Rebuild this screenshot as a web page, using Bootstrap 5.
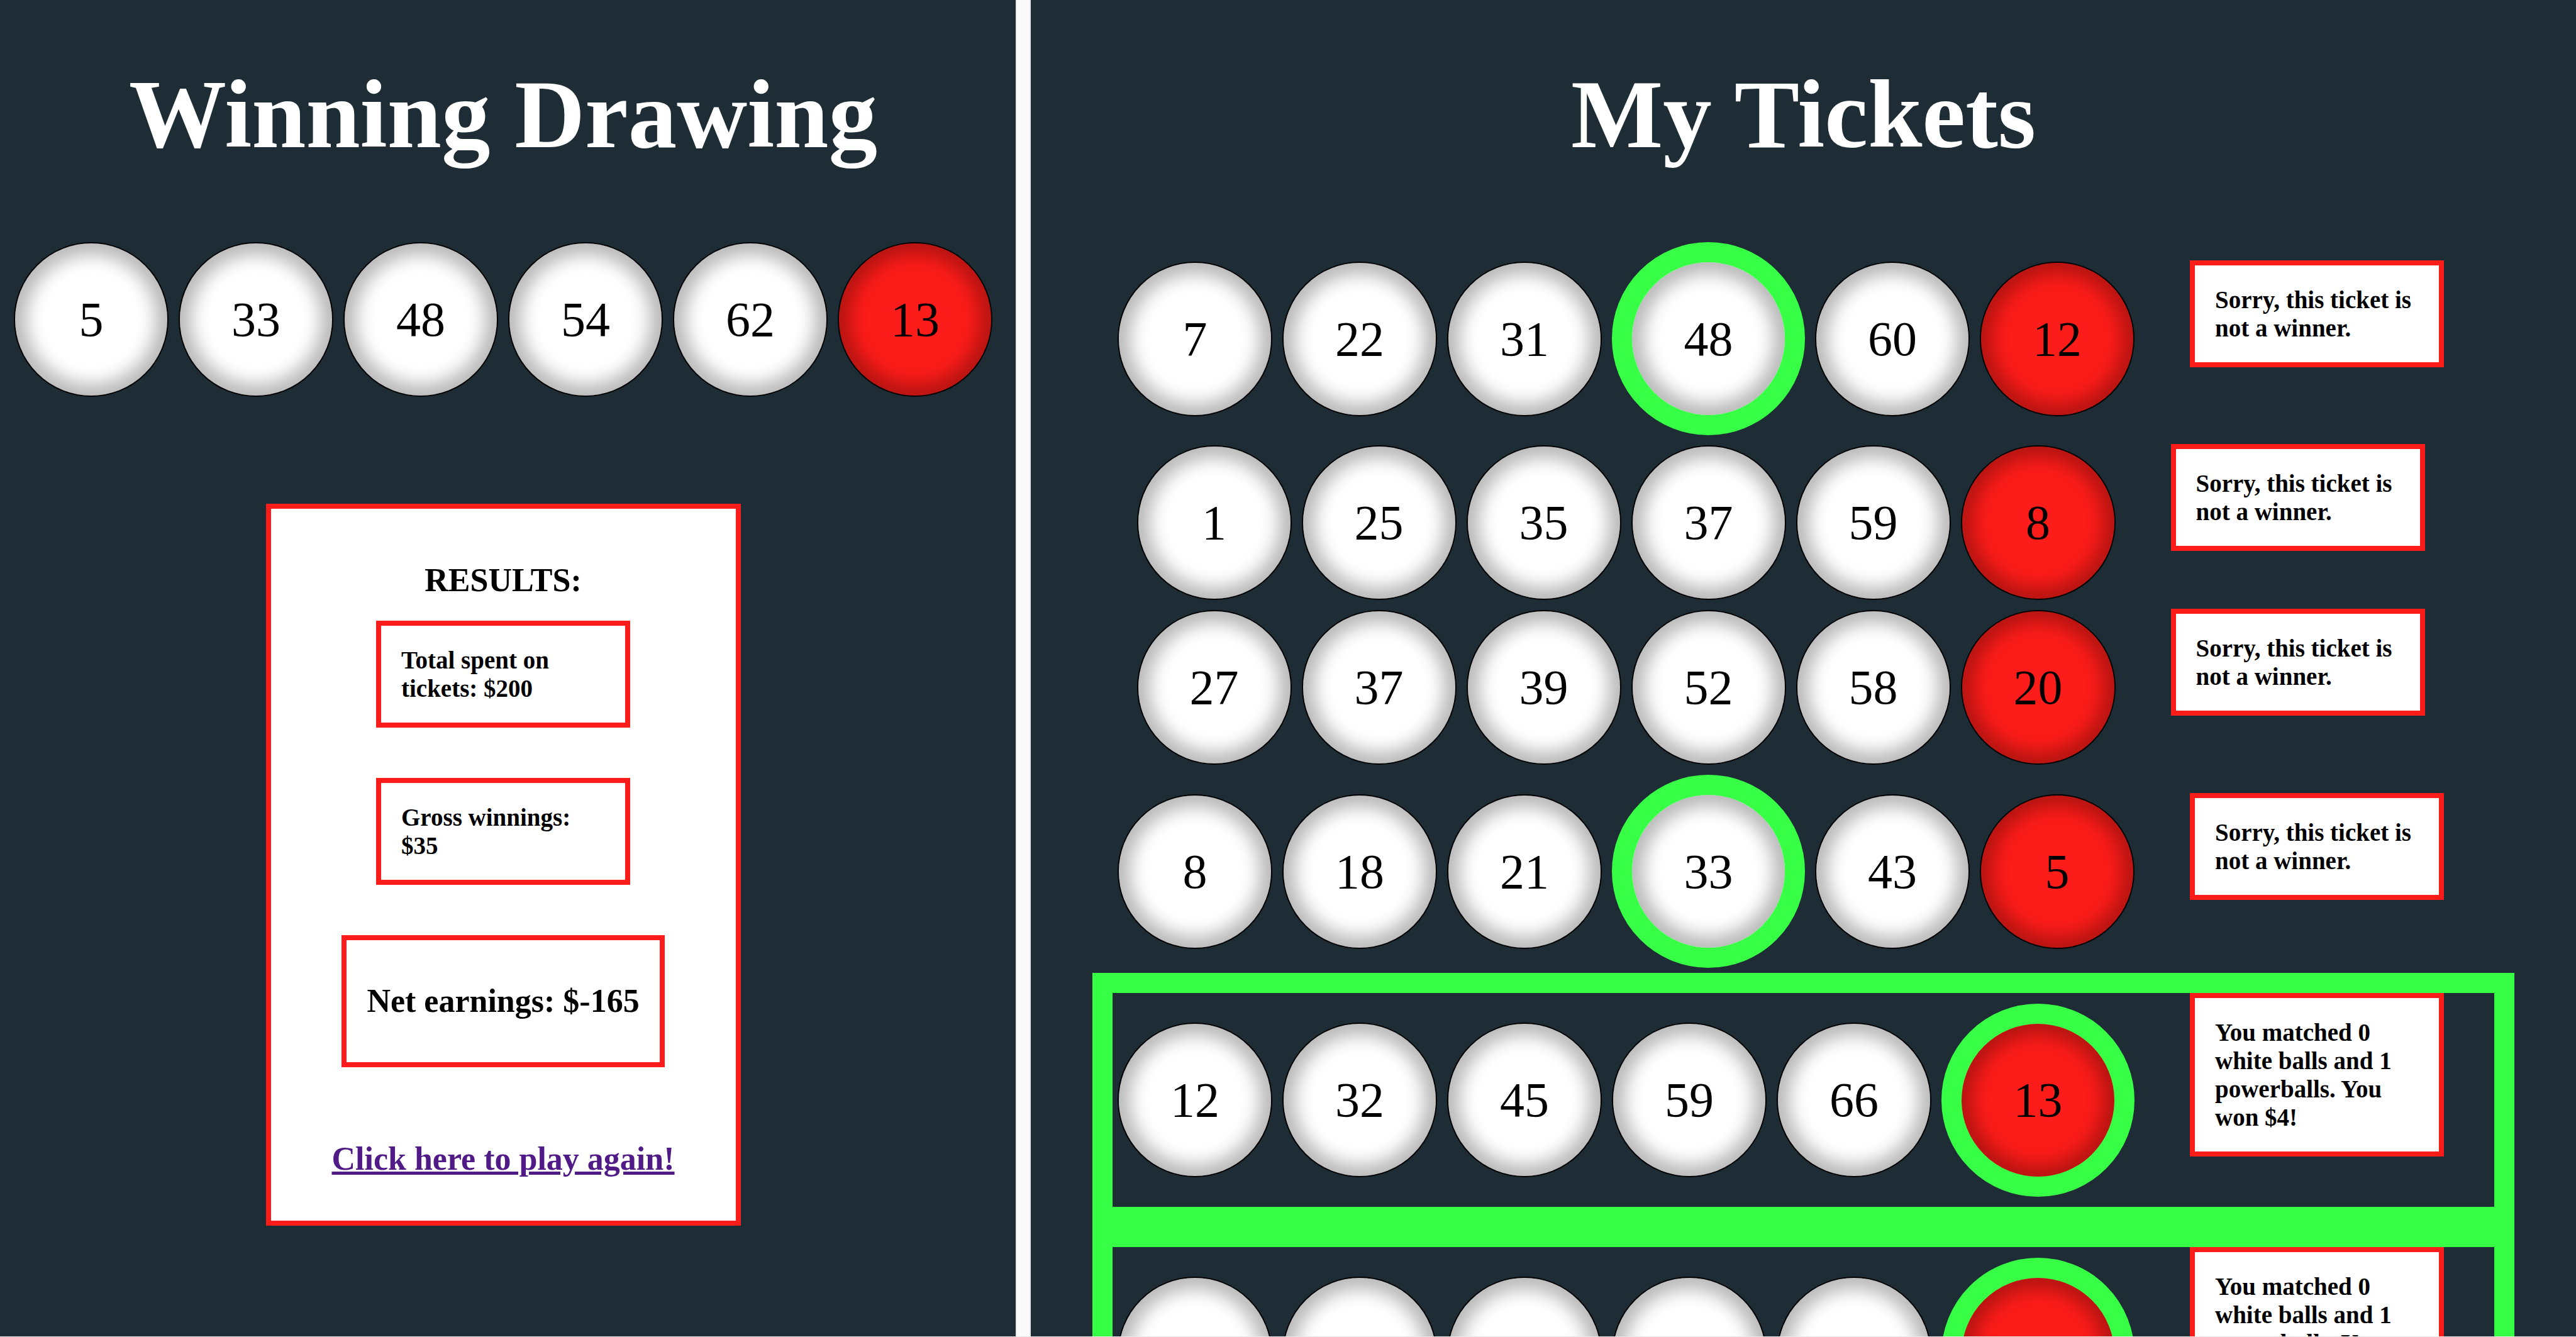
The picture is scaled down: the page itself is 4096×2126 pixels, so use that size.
<!DOCTYPE html>
<html lang="en">
<head>
<meta charset="utf-8">
<meta name="viewport" content="width=device-width, initial-scale=1">
<title>Powerball results</title>
<link rel="stylesheet" href="https://cdn.jsdelivr.net/npm/bootstrap@5.3.0/dist/css/bootstrap.min.css">
<style>
  :root { --night: #1e2d35; --win: #37ff46; --power: #fc1c19; --rail: #e8e8e8; }
  body { background: var(--rail); color: #000; font-family: "Liberation Serif", "Times New Roman", serif; }
  .frames { height: calc(100vh - 1px); }
  .pane { background: var(--night); }
  .pane-drawing { flex: 0 0 39.43%; padding-right: 15px; }
  .pane-divider { flex: 0 0 24px; background: #fafafa; border: solid var(--rail); border-width: 0 2px; }
  .pane-title { font-size: 155px; font-weight: 700; line-height: 178px; padding: 93px 0 106px; margin: 0; color: #fff; }
  .ball { flex: none; width: 246px; height: 246px; margin: 8px; border: 2px solid #000; border-radius: 50%;
    background: #fff; font-size: 78px; line-height: 90px; box-shadow: inset 0 0 28px 18px rgba(0, 0, 0, .28); }
  .ball-power { background: var(--power); }
  .ball-hit { width: 307px; height: 307px; border: 32px solid var(--win); }
  .note { width: 404px; border: 8px solid var(--power); background: #fff; padding: 32px; margin-bottom: 80px;
    font-size: 39px; font-weight: 700; line-height: 45px; }
  .ticket .note { margin-left: 80px; margin-right: 80px; }
  .ticket-win { border: 32px solid var(--win); }
  .results { width: 755px; margin-top: 162px; border: 8px solid var(--power); background: #fff; padding: 84px 0 68px;
    font-size: 52px; font-weight: 700; line-height: 60px; }
  .results h2 { font: inherit; margin: 0 0 34px; }
  .note.note-net { width: auto; font-size: 52px; line-height: 60px; padding: 67px 32px; }
  .again { color: #511b87; margin-top: 36px; }
  .again:hover { color: #511b87; }
</style>
</head>
<body>
<div class="frames d-flex overflow-hidden">
  <section class="pane pane-drawing d-flex flex-column align-items-center overflow-hidden">
    <h1 class="pane-title">Winning Drawing</h1>
    <div class="d-flex p-0" id="drawing"></div>
    <div class="results d-flex flex-column align-items-center">
      <h2>RESULTS:</h2>
      <div class="note">Total spent on tickets: $200</div>
      <div class="note">Gross winnings: $35</div>
      <div class="note note-net">Net earnings: $-165</div>
      <a class="again" href="#">Click here to play again!</a>
    </div>
  </section>
  <div class="pane-divider"></div>
  <main class="pane flex-fill d-flex flex-column align-items-center overflow-hidden">
    <h1 class="pane-title">My Tickets</h1>
    <div class="d-flex flex-column align-items-center" id="tickets"></div>
  </main>
</div>
<script src="https://cdn.jsdelivr.net/npm/bootstrap@5.3.0/dist/js/bootstrap.bundle.min.js"></script>
<script>
  const drawing = [5, 33, 48, 54, 62, 13];
  const tickets = [
    [7, 22, 31, 48, 60, 12],
    [1, 25, 35, 37, 59, 8],
    [27, 37, 39, 52, 58, 20],
    [8, 18, 21, 33, 43, 5],
    [12, 32, 45, 59, 66, 13],
    [7, 18, 28, 45, 49, 13]
  ];
  const whites = drawing.slice(0, 5);
  const isHit = (n, i) => i === 5 ? n === drawing[5] : whites.includes(n);
  const ball = (n, i, hit) =>
    `<div class="ball d-flex align-items-center justify-content-center${i === 5 ? ' ball-power' : ''}${hit ? ' ball-hit' : ''}">${n}</div>`;

  document.getElementById('drawing').innerHTML = drawing.map((n, i) => ball(n, i, false)).join('');
  document.getElementById('tickets').innerHTML = tickets.map(t => {
    const won = t[5] === drawing[5];
    const text = won ? 'You matched 0 white balls and 1 powerballs. You won $4!' : 'Sorry, this ticket is not a winner.';
    return `<div class="ticket d-flex align-items-center${won ? ' ticket-win' : ''}">
      <div class="d-flex align-items-center">${t.map((n, i) => ball(n, i, isHit(n, i))).join('')}</div>
      <div class="note">${text}</div>
    </div>`;
  }).join('');
</script>
</body>
</html>
